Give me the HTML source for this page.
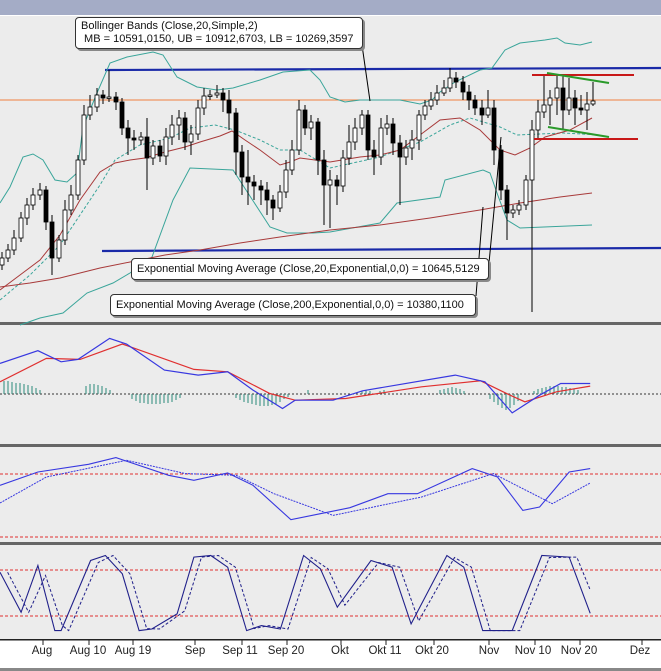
<!DOCTYPE html>
<html><head><meta charset="utf-8">
<style>
html,body{margin:0;padding:0;background:#fff;}
body{width:661px;height:671px;overflow:hidden;position:relative;font-family:"Liberation Sans",Arial,sans-serif;}
svg{position:absolute;left:0;top:0;}
.lbl{position:absolute;background:#fff;border:1px solid #333;border-radius:4px;box-shadow:2px 2px 0 #888;font-size:11px;line-height:13px;color:#111;white-space:nowrap;padding:2px 5px;box-sizing:border-box;}
.ax{position:absolute;top:645px;font-size:11.5px;color:#222;transform:translateX(-50%);}
</style></head><body>
<svg width="661" height="671" viewBox="0 0 661 671">
<rect x="0" y="0" width="661" height="671" fill="#fff"/>
<rect x="0" y="0" width="661" height="15" fill="#a4acc6"/>
<rect x="0" y="16" width="661" height="307" fill="#ececec"/>
<rect x="0" y="322" width="661" height="3" fill="#666"/>
<rect x="0" y="325" width="661" height="119" fill="#ececec"/>
<rect x="0" y="444" width="661" height="3" fill="#666"/>
<rect x="0" y="447" width="661" height="95" fill="#ececec"/>
<rect x="0" y="542" width="661" height="3" fill="#666"/>
<rect x="0" y="545" width="661" height="94" fill="#ececec"/>
<rect x="0" y="639" width="661" height="1.5" fill="#222"/>
<rect x="0" y="668" width="661" height="3" fill="#888"/>

<line x1="0" y1="100" x2="661" y2="100" stroke="#f08040"/>
<line x1="105" y1="70" x2="661" y2="68" stroke="#1a2aa8" stroke-width="2.2"/>
<line x1="102" y1="251" x2="661" y2="248" stroke="#1a2aa8" stroke-width="2.2"/>

<g fill="none" stroke-width="1">
<polyline stroke="#3aa59a" points="0,203 10,187 23,157 33,154 43,160 55,180 67,182 77,173 83,127 97,93 110,63 127,57 153,52 163,55 177,77 197,87 217,90 233,88 260,80 283,72 310,70 320,80 330,97 345,102 360,100 400,100 420,104 432,100 440,92 455,82 480,70 492,68 505,50 520,43 545,40 557,38 565,43 580,45 592,42"/>
<polyline stroke="#3aa59a" points="20,325 40,318 63,313 87,293 113,283 130,273 152,257 173,200 190,168 233,170 270,227 287,233 313,233 330,232 380,223 397,203 440,197 445,180 483,170 490,173 497,193 507,220 520,228 592,225"/>
<polyline stroke="#3aa59a" stroke-dasharray="3,2" points="0,300 30,275 60,245 80,215 100,185 115,160 140,145 170,138 190,128 215,125 235,130 260,140 280,150 300,150 330,168 380,157 420,142 450,125 470,118 500,127 517,135 563,133 600,135"/>
<polyline stroke="#a83a3a" points="0,290 20,275 40,260 60,235 80,200 100,172 115,163 130,160 145,158 165,152 185,147 200,142 220,136 232,131 245,140 260,150 280,165 290,162 300,158 315,160 330,162 360,157 380,155 400,150 420,135 440,120 460,118 480,130 500,150 515,155 530,148 545,137 570,130 592,118"/>
<polyline stroke="#a83a3a" points="0,287 30,283 60,278 100,268 130,262 165,255 200,250 240,243 280,237 330,230 380,225 430,218 480,210 520,203 560,197 592,193"/>
</g>

<path stroke="#000" stroke-width="1" fill="none" d="M2,252V270M8,244V262M14,230V255M21,212V242M27,198V225M33,188V210M40,183V200M46,186V230M52,215V275M59,235V262M65,200V245M71,185V215M78,155V200M84,105V165M90,95V120M97,88V112M103,90V104M109,70V102M116,92V110M122,98V135M128,120V155M134,130V150M141,132V145M147,118V190M153,140V165M160,140V162M166,128V165M172,115V145M179,110V140M185,112V150M191,125V155M198,100V140M204,88V115M210,90V100M217,85V98M223,88V112M229,90V130M236,108V175M242,145V195M248,150V205M254,175V200M261,180V205M267,182V215M273,195V220M280,185V212M286,160V198M292,140V175M299,100V155M305,105V135M311,115V140M318,118V175M324,150V225M330,170V228M337,175V205M343,150V192M349,125V165M355,118V150M362,110V135M368,110V160M374,140V175M381,118V165M387,115V135M393,118V155M400,135V205M406,140V165M412,130V160M419,110V150M425,100V120M431,92V110M437,85V105M444,80V96M450,68V92M456,72V88M463,76V100M469,85V110M475,95V115M482,100V125M488,90V118M494,100V165M501,145V200M507,185V240M513,205V218M519,200V215M526,175V210M532,120V312M538,100V138M544,75V118M550,90V125M557,75V115M563,75V130M569,78V115M575,90V125M581,95V115M587,92V130M593,82V106"/>
<g stroke="#000" stroke-width="0.8">
<rect x="0" y="258" width="4" height="7" fill="#fff"/>
<rect x="6" y="250" width="4" height="8" fill="#fff"/>
<rect x="12" y="238" width="4" height="12" fill="#fff"/>
<rect x="19" y="218" width="4" height="20" fill="#fff"/>
<rect x="25" y="205" width="4" height="13" fill="#fff"/>
<rect x="31" y="195" width="4" height="10" fill="#fff"/>
<rect x="38" y="190" width="4" height="5" fill="#fff"/>
<rect x="44" y="190" width="4" height="32" fill="#000"/>
<rect x="50" y="222" width="4" height="36" fill="#000"/>
<rect x="57" y="240" width="4" height="18" fill="#fff"/>
<rect x="63" y="210" width="4" height="30" fill="#fff"/>
<rect x="69" y="195" width="4" height="15" fill="#fff"/>
<rect x="76" y="160" width="4" height="35" fill="#fff"/>
<rect x="82" y="115" width="4" height="45" fill="#fff"/>
<rect x="88" y="107" width="4" height="8" fill="#fff"/>
<rect x="95" y="95" width="4" height="12" fill="#fff"/>
<rect x="101" y="95" width="4" height="3" fill="#000"/>
<rect x="107" y="97" width="4" height="1.5" fill="#fff"/>
<rect x="114" y="97" width="4" height="5" fill="#000"/>
<rect x="120" y="102" width="4" height="26" fill="#000"/>
<rect x="126" y="128" width="4" height="10" fill="#000"/>
<rect x="132" y="138" width="4" height="2" fill="#000"/>
<rect x="139" y="137" width="4" height="3" fill="#fff"/>
<rect x="145" y="137" width="4" height="21" fill="#000"/>
<rect x="151" y="146" width="4" height="12" fill="#fff"/>
<rect x="158" y="146" width="4" height="10" fill="#000"/>
<rect x="164" y="137" width="4" height="19" fill="#fff"/>
<rect x="170" y="125" width="4" height="12" fill="#fff"/>
<rect x="177" y="118" width="4" height="7" fill="#fff"/>
<rect x="183" y="118" width="4" height="24" fill="#000"/>
<rect x="189" y="134" width="4" height="8" fill="#fff"/>
<rect x="196" y="108" width="4" height="26" fill="#fff"/>
<rect x="202" y="96" width="4" height="12" fill="#fff"/>
<rect x="208" y="95" width="4" height="1.5" fill="#fff"/>
<rect x="215" y="93" width="4" height="2" fill="#fff"/>
<rect x="221" y="93" width="4" height="7" fill="#000"/>
<rect x="227" y="100" width="4" height="13" fill="#000"/>
<rect x="234" y="113" width="4" height="39" fill="#000"/>
<rect x="240" y="152" width="4" height="25" fill="#000"/>
<rect x="246" y="177" width="4" height="5" fill="#000"/>
<rect x="252" y="182" width="4" height="4" fill="#000"/>
<rect x="259" y="186" width="4" height="4" fill="#000"/>
<rect x="265" y="190" width="4" height="10" fill="#000"/>
<rect x="271" y="200" width="4" height="8" fill="#000"/>
<rect x="278" y="192" width="4" height="16" fill="#fff"/>
<rect x="284" y="170" width="4" height="22" fill="#fff"/>
<rect x="290" y="150" width="4" height="20" fill="#fff"/>
<rect x="297" y="110" width="4" height="40" fill="#fff"/>
<rect x="303" y="110" width="4" height="18" fill="#000"/>
<rect x="309" y="122" width="4" height="6" fill="#fff"/>
<rect x="316" y="122" width="4" height="38" fill="#000"/>
<rect x="322" y="160" width="4" height="25" fill="#000"/>
<rect x="328" y="180" width="4" height="5" fill="#fff"/>
<rect x="335" y="180" width="4" height="6" fill="#000"/>
<rect x="341" y="158" width="4" height="28" fill="#fff"/>
<rect x="347" y="142" width="4" height="16" fill="#fff"/>
<rect x="353" y="128" width="4" height="14" fill="#fff"/>
<rect x="360" y="115" width="4" height="13" fill="#fff"/>
<rect x="366" y="115" width="4" height="35" fill="#000"/>
<rect x="372" y="150" width="4" height="7" fill="#000"/>
<rect x="379" y="128" width="4" height="29" fill="#fff"/>
<rect x="385" y="124" width="4" height="4" fill="#fff"/>
<rect x="391" y="124" width="4" height="19" fill="#000"/>
<rect x="398" y="143" width="4" height="14" fill="#000"/>
<rect x="404" y="148" width="4" height="9" fill="#fff"/>
<rect x="410" y="140" width="4" height="8" fill="#fff"/>
<rect x="417" y="115" width="4" height="25" fill="#fff"/>
<rect x="423" y="106" width="4" height="9" fill="#fff"/>
<rect x="429" y="100" width="4" height="6" fill="#fff"/>
<rect x="435" y="93" width="4" height="7" fill="#fff"/>
<rect x="442" y="88" width="4" height="5" fill="#fff"/>
<rect x="448" y="78" width="4" height="10" fill="#fff"/>
<rect x="454" y="78" width="4" height="4" fill="#000"/>
<rect x="461" y="82" width="4" height="10" fill="#000"/>
<rect x="467" y="92" width="4" height="8" fill="#000"/>
<rect x="473" y="100" width="4" height="8" fill="#000"/>
<rect x="480" y="108" width="4" height="7" fill="#000"/>
<rect x="486" y="108" width="4" height="7" fill="#fff"/>
<rect x="492" y="108" width="4" height="42" fill="#000"/>
<rect x="499" y="150" width="4" height="40" fill="#000"/>
<rect x="505" y="190" width="4" height="23" fill="#000"/>
<rect x="511" y="210" width="4" height="3" fill="#fff"/>
<rect x="517" y="205" width="4" height="5" fill="#fff"/>
<rect x="524" y="180" width="4" height="25" fill="#fff"/>
<rect x="530" y="130" width="4" height="50" fill="#fff"/>
<rect x="536" y="112" width="4" height="18" fill="#fff"/>
<rect x="542" y="105" width="4" height="7" fill="#fff"/>
<rect x="548" y="98" width="4" height="7" fill="#fff"/>
<rect x="555" y="88" width="4" height="10" fill="#fff"/>
<rect x="561" y="88" width="4" height="22" fill="#000"/>
<rect x="567" y="98" width="4" height="12" fill="#fff"/>
<rect x="573" y="98" width="4" height="10" fill="#000"/>
<rect x="579" y="108" width="4" height="2" fill="#000"/>
<rect x="585" y="104" width="4" height="6" fill="#fff"/>
<rect x="591" y="101" width="4" height="3" fill="#fff"/>
</g>

<line x1="532" y1="75" x2="634" y2="75" stroke="#c81818" stroke-width="2"/>
<line x1="534" y1="139" x2="638" y2="139" stroke="#c81818" stroke-width="2"/>
<line x1="547" y1="73" x2="609" y2="83" stroke="#2a9a2a" stroke-width="2"/>
<line x1="548" y1="127" x2="609" y2="137" stroke="#2a9a2a" stroke-width="2"/>
<line x1="362" y1="45" x2="370" y2="101" stroke="#000"/>
<line x1="489" y1="263" x2="501" y2="137" stroke="#000"/>
<line x1="476" y1="296" x2="483" y2="207" stroke="#000"/>

<!-- MACD -->
<line x1="0" y1="394" x2="661" y2="394" stroke="#333" stroke-dasharray="2,2"/>
<path stroke="#2a8a7a" fill="none" d="M4,394V381M8,394V381M12,394V382M16,394V383M20,394V383M24,394V384M28,394V385M32,394V386M36,394V388M40,394V390M86,394V386M90,394V384M94,394V384M98,394V385M102,394V386M106,394V388M110,394V390M132,394V399M136,394V401M140,394V403M144,394V403M148,394V404M152,394V404M156,394V404M160,394V404M164,394V403M168,394V403M172,394V402M176,394V400M180,394V398M236,394V398M240,394V400M244,394V402M248,394V403M252,394V404M256,394V405M260,394V406M264,394V406M268,394V406M272,394V405M276,394V404M280,394V402M284,394V399M288,394V397M308,394V390M362,394V391M366,394V390M370,394V391M380,394V391M384,394V390M440,394V390M444,394V389M448,394V388M452,394V387M456,394V388M460,394V389M464,394V391M490,394V399M494,394V402M498,394V405M502,394V408M506,394V410M510,394V408M514,394V405M518,394V401M534,394V391M538,394V389M542,394V388M546,394V387M550,394V386M554,394V386M558,394V386M562,394V387M566,394V387M570,394V388M574,394V389M578,394V390"/>
<polyline fill="none" stroke="#e03030" stroke-width="1.2" points="0,381.8 46.4,358.4 80.1,359.4 122.3,344 193.9,369.4 227.7,371.8 269.8,393.5 295.1,400.2 345.7,398.5 421.6,386.8 480.6,380.8 510.1,395.2 524.9,401.8 556.5,391.8 590.2,386.1"/>
<polyline fill="none" stroke="#3838e0" stroke-width="1.2" points="0,363.4 37.9,350.7 61.1,361.8 78,359.4 109.6,338.4 126.5,344 164.4,370.1 198.2,375.1 227.7,371.8 253,390.1 282.5,408.5 295.1,400.2 333.1,400.2 362.6,390.8 455.3,375.1 484.9,381.8 512.2,412.9 539.6,395.2 560.7,383.5 590.2,383.5"/>

<!-- middle -->
<line x1="0" y1="474" x2="661" y2="474" stroke="#e03030" stroke-dasharray="3,2"/>
<line x1="0" y1="537" x2="661" y2="537" stroke="#e03030" stroke-dasharray="3,2"/>
<polyline fill="none" stroke="#3838e0" stroke-width="1.1" points="0,485.3 37.9,472 88.5,464.3 115.9,457.6 168.6,475.3 193.9,480.3 227.7,473 253,485.3 290.9,519.7 320.4,513.7 349.9,507.7 387.9,493.7 417.4,493.7 472.2,468.6 497.5,477 522.8,510.4 539.6,507 569.2,472 590.2,468.6"/>
<polyline fill="none" stroke="#3838e0" stroke-dasharray="2,1" points="0,503 46.4,477 126.5,460.3 185.5,473.6 236.1,475.3 274,493.7 333.1,515.4 421.6,497 493.3,473.6 552.3,503.7 590.2,483"/>

<!-- stoch -->
<line x1="0" y1="570" x2="661" y2="570" stroke="#e03030" stroke-dasharray="3,2"/>
<line x1="0" y1="616" x2="661" y2="616" stroke="#e03030" stroke-dasharray="3,2"/>
<polyline fill="none" stroke="#20208a" stroke-width="1.1" points="0,572.2 21.1,612.3 37.9,565.5 54.8,630.6 61.1,630.6 90.6,560.5 105.4,555.5 122.3,573.8 139.1,630.6 151.8,629 177.1,613.9 193.9,557.1 210.8,555.5 227.7,567.2 246.6,630.6 261.4,625.6 280.4,629 303.6,555.5 320.4,568.8 337.3,607.2 371,560.5 392.1,567.2 411.1,623.9 446.9,555.5 463.8,567.2 482.7,630.6 512.2,630.6 541.8,555.5 569.2,557.1 590.2,613.3"/>
<polyline fill="none" stroke="#20208a" stroke-dasharray="3,2" points="7.6,572.2 28.7,612.3 45.5,575.5 62.4,625.6 68.7,630.6 98.2,562.5 113,555.5 129.9,573.8 146.7,628.6 159.4,629 184.7,610.9 201.5,557.1 218.4,555.5 235.3,567.2 254.2,628.6 269,625.6 288,629 311.2,557.5 328,568.8 344.9,605.2 378.6,562.5 399.7,567.2 418.7,620.9 454.5,557.5 471.4,567.2 490.3,630.6 519.8,630.6 549.4,557.5 576.8,557.1 590.2,590"/>

<path stroke="#222" d="M43,640V645M89,640V645M133,640V645M195,640V645M242,640V645M287,640V645M341,640V645M386,640V645M434,640V645M489,640V645M535,640V645M580,640V645M642,640V645"/>
</svg>
<div class="lbl" style="left:75px;top:17px;width:288px;height:32px;">Bollinger Bands (Close,20,Simple,2)<br>&nbsp;MB = 10591,0150, UB = 10912,6703, LB = 10269,3597</div>
<div class="lbl" style="left:131px;top:258px;width:358px;height:22px;padding-top:4px;">Exponential Moving Average (Close,20,Exponential,0,0) = 10645,5129</div>
<div class="lbl" style="left:110px;top:294px;width:366px;height:22px;padding-top:4px;">Exponential Moving Average (Close,200,Exponential,0,0) = 10380,1100</div>
<div class="ax" style="left:42px">Aug</div>
<div class="ax" style="left:88px">Aug 10</div>
<div class="ax" style="left:133px">Aug 19</div>
<div class="ax" style="left:195px">Sep</div>
<div class="ax" style="left:240px">Sep 11</div>
<div class="ax" style="left:286px">Sep 20</div>
<div class="ax" style="left:340px">Okt</div>
<div class="ax" style="left:385px">Okt 11</div>
<div class="ax" style="left:432px">Okt 20</div>
<div class="ax" style="left:489px">Nov</div>
<div class="ax" style="left:533px">Nov 10</div>
<div class="ax" style="left:579px">Nov 20</div>
<div class="ax" style="left:640px">Dez</div>
</body></html>
